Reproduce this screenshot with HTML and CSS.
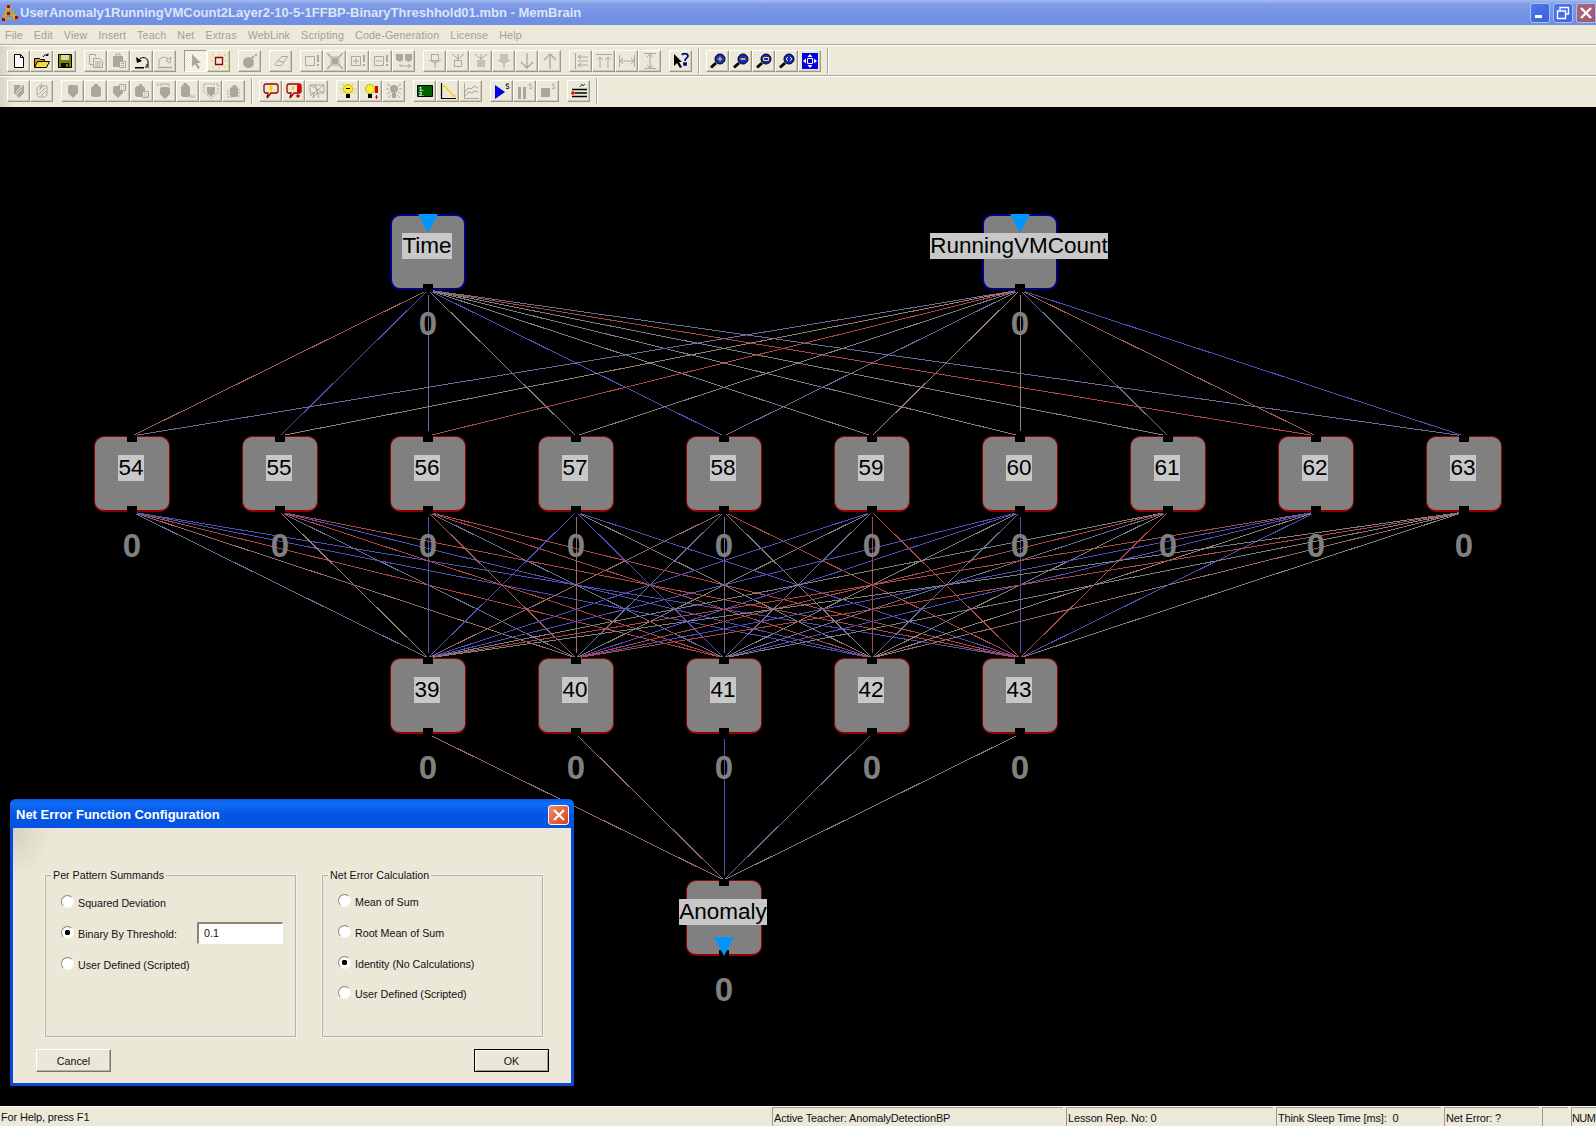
FILE: index.html
```html
<!DOCTYPE html>
<html lang="en">
<head>
    <meta charset="UTF-8">
    <title>MemBrain</title>
    <link rel="stylesheet" href="styles.css">
</head>
<body>

<svg class="icon-defs" width="0" height="0">
    <symbol id="i-new" viewBox="0 0 16 16"><path d="M3.5 1.5h6l3 3v10h-9z" fill="#fff" stroke="#000"/><path d="M9.5 1.5v3h3" fill="none" stroke="#000"/></symbol>
    <symbol id="i-open" viewBox="0 0 16 16"><path d="M.5 14V5.5h5l1 1h4v2" fill="#c8a018" stroke="#000"/><path d="M.5 14.5l3-6h12l-3 6z" fill="#f8d838" stroke="#000"/><path d="M9 4c1-2 3-3 5-2M14 .5v2h-2" fill="none" stroke="#000"/></symbol>
    <symbol id="i-save" viewBox="0 0 16 16"><path d="M1.5 1.5h13v13h-13z" fill="#808000" stroke="#000"/><path d="M4 2h8v5H4z" fill="#d8d8b0"/><path d="M4 10h8v4H4z" fill="#111"/><path d="M9 11h2v3H9z" fill="#808000"/></symbol>
    <symbol id="i-copy" viewBox="0 0 16 16"><g fill="none" stroke="currentColor"><path d="M1.5 1.5h6v2M1.5 1.5v10h4"/><path d="M5.5 5.5h6l3 3v6h-9z"/><path d="M7 9h6M7 11h6M7 13h6"/></g></symbol>
    <symbol id="i-paste" viewBox="0 0 16 16"><path d="M2 3h10v11H2z" fill="currentColor"/><path d="M5 1h4v3H5z" fill="none" stroke="currentColor"/><path d="M8.5 8.5h6v6h-6z" fill="#ece9d8" stroke="currentColor"/><path d="M10 10.5h3M10 12.5h3" stroke="currentColor"/></symbol>
    <symbol id="i-undo" viewBox="0 0 16 16"><path d="M1 14h9v1.5H1z" fill="currentColor"/><path d="M14 13V9c0-5-7-6-9-2" fill="none" stroke="currentColor"/><path d="M2 4l1 6 5-2z" fill="currentColor"/><path d="M11 14h4M12 12h2" stroke="currentColor"/></symbol>
    <symbol id="i-redo" viewBox="0 0 16 16"><path d="M2 13V8c0-4 7-5 9-2" fill="none" stroke="currentColor"/><path d="M14 4l-1 6-4-2z" fill="none" stroke="currentColor"/><path d="M1 14.5h14" stroke="currentColor" stroke-width="1.5"/></symbol>
    <symbol id="i-arrow" viewBox="0 0 16 16"><path d="M4 1l9 9H9l3 5-2 1-3-5-3 3z" fill="currentColor"/></symbol>
    <symbol id="i-square" viewBox="0 0 16 16"><path d="M4.5 4.5h7v7h-7z" fill="none" stroke="#900" stroke-width="1.3"/><path d="M1 1l2 2M15 1l-2 2M1 15l2-2M15 15l-2-2M8 0v2M0 8h2M16 8h-2M8 16v-2" stroke="#f0d000"/></symbol>
    <symbol id="i-bomb" viewBox="0 0 16 16"><circle cx="6.5" cy="9.5" r="5.5" fill="currentColor"/><path d="M10 5l2-2" stroke="currentColor" stroke-width="2"/><path d="M13 1h2v2h-2z" fill="currentColor"/></symbol>
    <symbol id="i-eraser" viewBox="0 0 16 16"><path d="M1.5 11.5l7-8h6l-6 9h-5zM5 8l5 1" fill="none" stroke="currentColor"/></symbol>
    <symbol id="i-box-x" viewBox="0 0 16 16"><path d="M1.5 3.5h9v9h-9z" fill="none" stroke="currentColor"/><path d="M13 2h2v7h-2zM13 11h2v2h-2z" fill="currentColor"/></symbol>
    <symbol id="i-cross-box" viewBox="0 0 16 16"><path d="M4 4h8v8H4z" fill="none" stroke="currentColor"/><path d="M0 0l4 4M16 0l-4 4M0 16l4-4M16 16l-4-4" stroke="currentColor" stroke-width="1.5"/><path d="M5 5h6v6H5z" fill="currentColor"/></symbol>
    <symbol id="i-plus-box" viewBox="0 0 16 16"><path d="M1.5 3.5h9v9h-9zM6 5v6M3 8h6" fill="none" stroke="currentColor"/><path d="M13 2h2v7h-2zM13 11h2v2h-2z" fill="currentColor"/></symbol>
    <symbol id="i-minus-box" viewBox="0 0 16 16"><path d="M1.5 3.5h9v9h-9zM3 8h6" fill="none" stroke="currentColor"/><path d="M13 2h2v7h-2zM13 11h2v2h-2z" fill="currentColor"/></symbol>
    <symbol id="i-merge" viewBox="0 0 16 16"><path d="M0 1h7v6l-3 2-4-2zM9 1h7v6l-3 2-4-2z" fill="currentColor"/><path d="M4 11v2h10M12 11l3 2-3 2" fill="none" stroke="currentColor"/></symbol>
    <symbol id="i-figure" viewBox="0 0 16 16"><path d="M4.5 1.5h7v6h-7zM8 8v7M2 7l6 3 6-3" fill="none" stroke="currentColor"/></symbol>
    <symbol id="i-figure2" viewBox="0 0 16 16"><path d="M4.5 7.5h7v6h-7zM8 7V1M2 1l6 5 6-5" fill="none" stroke="currentColor"/></symbol>
    <symbol id="i-figure3" viewBox="0 0 16 16"><path d="M4 7h8v7H4z" fill="currentColor" opacity=".6"/><path d="M8 7V1M2 1l6 5 6-5" fill="none" stroke="currentColor"/></symbol>
    <symbol id="i-figure4" viewBox="0 0 16 16"><path d="M4 1h8v7H4z" fill="currentColor" opacity=".6"/><path d="M8 8v7M2 7l6 3 6-3" fill="none" stroke="currentColor"/></symbol>
    <symbol id="i-down" viewBox="0 0 16 16"><path d="M8 0v15M2 9l6 6 6-6" fill="none" stroke="currentColor" stroke-width="1.3"/></symbol>
    <symbol id="i-up" viewBox="0 0 16 16"><path d="M8 16V1M2 7l6-6 6 6" fill="none" stroke="currentColor" stroke-width="1.3"/></symbol>
    <symbol id="i-align-l" viewBox="0 0 16 16"><path d="M2.5 0v16M5 4h10M5 8h10M5 12h10" fill="none" stroke="currentColor"/><path d="M5 4l3-2M5 4l3 2M5 12l3-2M5 12l3 2" stroke="currentColor"/></symbol>
    <symbol id="i-align-t" viewBox="0 0 16 16"><path d="M0 1.5h16M4 4v11M12 4v11M1 7l3-3 3 3M9 7l3-3 3 3" fill="none" stroke="currentColor"/></symbol>
    <symbol id="i-width" viewBox="0 0 16 16"><path d="M.5 2v12M15.5 2v12M1 8h14M4 5L1 8l3 3M12 5l3 3-3 3" fill="none" stroke="currentColor"/></symbol>
    <symbol id="i-height" viewBox="0 0 16 16"><path d="M2 .5h12M2 15.5h12M8 1v14M5 4l3-3 3 3M5 12l3 3 3-3" fill="none" stroke="currentColor"/></symbol>
    <symbol id="i-help" viewBox="0 0 16 16"><path d="M1 1l8 8H6l3 5-2 1-3-5-3 3z" fill="#000"/><path d="M9 2c1-2 6-2 6 1 0 2-3 2-3 5M11 10h2v2h-2z" fill="none" stroke="#000080" stroke-width="1.7"/></symbol>
    <symbol id="i-zoom-in" viewBox="0 0 16 16"><path d="M6 10l-5 4.5" stroke="#000" stroke-width="3"/><circle cx="10" cy="6" r="5" fill="#1428c8" stroke="#000"/><path d="M10 3.5v5M7.5 6h5" stroke="#f8e020"/></symbol>
    <symbol id="i-zoom-out" viewBox="0 0 16 16"><path d="M6 10l-5 4.5" stroke="#000" stroke-width="3"/><circle cx="10" cy="6" r="5" fill="#1428c8" stroke="#000"/><path d="M7.5 6h5" stroke="#f8e020" stroke-width="1.5"/></symbol>
    <symbol id="i-zoom-box" viewBox="0 0 16 16"><path d="M6 10l-5 4.5" stroke="#000" stroke-width="3"/><circle cx="10" cy="6" r="5" fill="#1428c8" stroke="#000"/><path d="M7.5 4.5h5v3h-5z" fill="none" stroke="#f8e020"/></symbol>
    <symbol id="i-zoom-fit" viewBox="0 0 16 16"><path d="M6 10l-5 4.5" stroke="#000" stroke-width="3"/><circle cx="10" cy="6" r="5" fill="#1428c8" stroke="#000"/><path d="M9 4L7 6l2 2M11 4l2 2-2 2" fill="none" stroke="#e8e8e8"/></symbol>
    <symbol id="i-pan" viewBox="0 0 16 16"><path d="M0 0h16v16H0z" fill="#0000e0"/><path d="M8 1l2.5 3h-5zM8 15l2.5-3h-5zM1 8l3-2.5v5zM15 8l-3-2.5v5z" fill="#fff"/><path d="M5.5 5.5h5v5h-5z" fill="none" stroke="#fff"/></symbol>

    <symbol id="i-shield" viewBox="0 0 16 16"><path d="M3 4q0-2 2-2h6q2 0 2 2v6l-5 5-5-5z" fill="currentColor"/></symbol>
    <symbol id="i-round" viewBox="0 0 16 16"><path d="M6 1h4v2h1l2 2v7l-2 2H5l-2-2V5l2-2h1z" fill="currentColor"/></symbol>
    <symbol id="i-shield-hatch" viewBox="0 0 16 16"><path d="M3 2h10v8l-5 5-5-5z" fill="currentColor"/><path d="M5 9l6-6M5 12l6-6M9 3h3" stroke="#ece9d8"/></symbol>
    <symbol id="i-round-hatch" viewBox="0 0 16 16"><path d="M5 3h8v9l-2 2H5l-2-2V5z" fill="none" stroke="currentColor"/><path d="M5 11l6-6M7 13l5-5M5 7l3-3M8 0L6 7" stroke="currentColor"/></symbol>
    <symbol id="i-shield-dots" viewBox="0 0 16 16"><path d="M2 5q0-2 2-2h8v7l-5 5-5-5z" fill="currentColor"/><path d="M8.5 1.5h6v6h-6z" fill="#ece9d8" stroke="currentColor"/><path d="M10 3h1v1h-1zM12.5 3h1v1h-1zM10 5.5h1v1h-1zM12.5 5.5h1v1h-1z" fill="currentColor"/></symbol>
    <symbol id="i-round-dots" viewBox="0 0 16 16"><path d="M5 1h3v2h1l2 2v7l-2 2H3l-2-2V5l2-2h2z" fill="currentColor"/><path d="M8.5 8.5h6v6h-6z" fill="#ece9d8" stroke="currentColor"/><path d="M10 10h1v1h-1zM12.5 10h1v1h-1zM10 12.5h1v1h-1zM12.5 12.5h1v1h-1z" fill="currentColor"/></symbol>
    <symbol id="i-shield-11" viewBox="0 0 16 16"><path d="M3 6q0-2 2-2h6q2 0 2 2v5l-5 5-5-5z" fill="currentColor"/><path d="M1 0v3M4 0v3M5 1h6M12 0v3" stroke="currentColor"/></symbol>
    <symbol id="i-round-11" viewBox="0 0 16 16"><path d="M4 0h3v2h1l2 2v8l-1 2H3l-2-2V4l2-2z" fill="currentColor"/><path d="M11 12v3M14 12v3M12 14h1" stroke="currentColor"/></symbol>
    <symbol id="i-shield-frame" viewBox="0 0 16 16"><path d="M4 4h8v6l-4 4-4-4z" fill="currentColor"/><path d="M1 1h14v8l-7 7-7-7z" fill="none" stroke="currentColor" stroke-dasharray="2 1"/></symbol>
    <symbol id="i-round-frame" viewBox="0 0 16 16"><path d="M7 2h3v1l2 2v7l-1 2H5l-1-2V5l3-2z" fill="currentColor"/><path d="M1 8h4M1 11h4M1 14h4M13 6v8" stroke="currentColor" stroke-dasharray="2 1"/></symbol>

    <symbol id="i-bubble" viewBox="0 0 16 16"><path d="M1 3q0-2 2-2h10q2 0 2 2v5q0 2-2 2H8l-4 5 1-5H3q-2 0-2-2z" fill="#ece9d8" stroke="#900" stroke-width="1.3"/><path d="M7 3h2v4H7zM7 8h2" fill="#f0d000" stroke="#f0d000"/></symbol>
    <symbol id="i-bubble-plus" viewBox="0 0 16 16"><path d="M1 3q0-2 2-2h10q2 0 2 2v5q0 2-2 2H8l-4 5 1-5H3q-2 0-2-2z" fill="#ece9d8" stroke="#900" stroke-width="1.3"/><path d="M6 3h2v4H6z" fill="#f0d000"/><path d="M11 2h4v8h-4z" fill="#e00000"/><path d="M12 11v4M10 13h4" stroke="#e00000" stroke-width="1.3"/></symbol>
    <symbol id="i-bubble-off" viewBox="0 0 16 16"><path d="M1 2h14v8H8l-4 5 1-5H1zM1 2l14 8M15 2L1 13M6 1l4 14" fill="none" stroke="currentColor"/></symbol>
    <symbol id="i-bulb" viewBox="0 0 16 16"><circle cx="8" cy="6" r="4.5" fill="#f8f030" stroke="#c8b000"/><path d="M6 11h4v4H6z" fill="#000"/><path d="M6 5l1 1 1-1 1 1 1-1" fill="none" stroke="#000"/><path d="M0 6h2M14 6h2M2 1l2 1M14 1l-2 1M1 10l2-1M15 10l-2-1" stroke="#e8d000"/></symbol>
    <symbol id="i-bulb-warn" viewBox="0 0 16 16"><circle cx="7" cy="6" r="4.5" fill="#f8f030" stroke="#c8b000"/><path d="M5 11h4v4H5z" fill="#000"/><path d="M12 3h3v7h-3z" fill="#e00000"/><path d="M13.5 12v4M12 14h3" stroke="#e00000"/></symbol>
    <symbol id="i-bulb-off" viewBox="0 0 16 16"><circle cx="8" cy="6" r="4" fill="currentColor"/><path d="M6 10h4v5H6z" fill="currentColor"/><path d="M0 6h3M13 6h3M1 1l3 2M15 1l-3 2M1 11l3-2M15 11l-3-2M2 15l3-3M14 15l-3-3" stroke="currentColor"/></symbol>
    <symbol id="i-chart" viewBox="0 0 16 16"><path d="M1.5 0v15.5H16" fill="none" stroke="#000" stroke-width="1.2"/><path d="M2 3h3l3 4 3 3 2 3h3" fill="none" stroke="#f0d000" stroke-width="1.3"/></symbol>
    <symbol id="i-chart-off" viewBox="0 0 16 16"><path d="M1.5 0v15.5H16M2 9l3-4 3 1 3-3 4 2M2 13l4-4 3 1 3-2 3 1" fill="none" stroke="currentColor"/></symbol>
    <symbol id="i-play" viewBox="0 0 16 16"><path d="M1 2l10 7-10 7z" fill="#0000e0"/><path d="M15 1.5c-1-1-3-1-3 .5s3 1 3 2.5-2 1.5-3 .5" fill="none" stroke="#000"/></symbol>
    <symbol id="i-pause" viewBox="0 0 16 16"><path d="M1 4h3v12H1zM6 4h3v12H6z" fill="currentColor"/><path d="M15 1.5c-1-1-3-1-3 .5s3 1 3 2.5-2 1.5-3 .5" fill="none" stroke="currentColor"/></symbol>
    <symbol id="i-stop" viewBox="0 0 16 16"><path d="M1 5h9v9H1z" fill="currentColor"/><path d="M15 1.5c-1-1-3-1-3 .5s3 1 3 2.5-2 1.5-3 .5" fill="none" stroke="currentColor"/></symbol>
    <symbol id="i-list" viewBox="0 0 16 16"><path d="M1 6.5h15M4 10h12M1 13.5h15" stroke="#000" stroke-width="1.5" fill="none"/><circle cx="2" cy="10" r="1.8" fill="#e00000"/><path d="M9 4l2-3 1 2 2-2" fill="none" stroke="#008000"/></symbol>
</svg>

<div class="window">
    <div class="titlebar">
        <svg class="app-icon" width="18" height="18" viewBox="0 0 18 18">
            <path d="M2 15L7 2l9 12zM2 15l5-6 9 5M7 2v7" fill="none" stroke="#d8b000" stroke-width="1.5"/>
            <path d="M6 1h3v3H6zM1 14h3v3H1zM14 12h3v3h-3zM6 8h3v3H6z" fill="#c00000"/>
        </svg>
        <span class="title-text">UserAnomaly1RunningVMCount2Layer2-10-5-1FFBP-BinaryThreshhold01.mbn - MemBrain</span>
        <div class="win-buttons">
            <div class="win-btn">
                <svg width="12" height="12" viewBox="0 0 12 12"><path d="M1 8h7v3H1z" fill="#fff"/></svg>
            </div>
            <div class="win-btn">
                <svg width="14" height="14" viewBox="0 0 14 14"><path d="M4 4V1.5h8.5V8H10M1.5 5h8v7.5h-8z" fill="none" stroke="#fff" stroke-width="1.4"/></svg>
            </div>
            <div class="win-btn win-close">
                <svg width="14" height="14" viewBox="0 0 14 14"><path d="M2 2l10 10M12 2L2 12" stroke="#fff" stroke-width="2.4"/></svg>
            </div>
        </div>
    </div>

    <div class="menubar">
        <span>File</span>
        <span>Edit</span>
        <span>View</span>
        <span>Insert</span>
        <span>Teach</span>
        <span>Net</span>
        <span>Extras</span>
        <span>WebLink</span>
        <span>Scripting</span>
        <span>Code-Generation</span>
        <span>License</span>
        <span>Help</span>
    </div>

    <div class="toolbar">
        <div class="tool-group">
            <div class="tool"><svg><use href="#i-new"/></svg></div>
            <div class="tool"><svg><use href="#i-open"/></svg></div>
            <div class="tool"><svg><use href="#i-save"/></svg></div>
        </div>
        <div class="tool-group">
            <div class="tool"><svg><use href="#i-copy"/></svg></div>
            <div class="tool"><svg><use href="#i-paste"/></svg></div>
            <div class="tool on-dark"><svg><use href="#i-undo"/></svg></div>
            <div class="tool"><svg><use href="#i-redo"/></svg></div>
        </div>
        <div class="tool-group">
            <div class="tool tool-pressed"><svg><use href="#i-arrow"/></svg></div>
            <div class="tool"><svg><use href="#i-square"/></svg></div>
        </div>
        <div class="tool-group">
            <div class="tool"><svg><use href="#i-bomb"/></svg></div>
        </div>
        <div class="tool-group">
            <div class="tool"><svg><use href="#i-eraser"/></svg></div>
        </div>
        <div class="tool-group">
            <div class="tool"><svg><use href="#i-box-x"/></svg></div>
            <div class="tool"><svg><use href="#i-cross-box"/></svg></div>
            <div class="tool"><svg><use href="#i-plus-box"/></svg></div>
            <div class="tool"><svg><use href="#i-minus-box"/></svg></div>
            <div class="tool"><svg><use href="#i-merge"/></svg></div>
        </div>
        <div class="tool-group">
            <div class="tool"><svg><use href="#i-figure"/></svg></div>
            <div class="tool"><svg><use href="#i-figure2"/></svg></div>
            <div class="tool"><svg><use href="#i-figure3"/></svg></div>
            <div class="tool"><svg><use href="#i-figure4"/></svg></div>
            <div class="tool"><svg><use href="#i-down"/></svg></div>
            <div class="tool"><svg><use href="#i-up"/></svg></div>
        </div>
        <div class="tool-group">
            <div class="tool"><svg><use href="#i-align-l"/></svg></div>
            <div class="tool"><svg><use href="#i-align-t"/></svg></div>
            <div class="tool"><svg><use href="#i-width"/></svg></div>
            <div class="tool"><svg><use href="#i-height"/></svg></div>
        </div>
        <div class="tool-group">
            <div class="tool"><svg><use href="#i-help"/></svg></div>
        </div>
        <div class="tool-sep"></div>
        <div class="tool-group">
            <div class="tool"><svg><use href="#i-zoom-in"/></svg></div>
            <div class="tool"><svg><use href="#i-zoom-out"/></svg></div>
            <div class="tool"><svg><use href="#i-zoom-box"/></svg></div>
            <div class="tool"><svg><use href="#i-zoom-fit"/></svg></div>
            <div class="tool"><svg><use href="#i-pan"/></svg></div>
        </div>
        <div class="tool-sep"></div>
    </div>

    <div class="toolbar toolbar-second">
        <div class="tool-group">
            <div class="tool"><svg><use href="#i-shield-hatch"/></svg></div>
            <div class="tool"><svg><use href="#i-round-hatch"/></svg></div>
        </div>
        <div class="tool-group">
            <div class="tool"><svg><use href="#i-shield"/></svg></div>
            <div class="tool"><svg><use href="#i-round"/></svg></div>
            <div class="tool"><svg><use href="#i-shield-dots"/></svg></div>
            <div class="tool"><svg><use href="#i-round-dots"/></svg></div>
            <div class="tool"><svg><use href="#i-shield-11"/></svg></div>
            <div class="tool"><svg><use href="#i-round-11"/></svg></div>
            <div class="tool"><svg><use href="#i-shield-frame"/></svg></div>
            <div class="tool"><svg><use href="#i-round-frame"/></svg></div>
        </div>
        <div class="tool-sep"></div>
        <div class="tool-group">
            <div class="tool"><svg><use href="#i-bubble"/></svg></div>
            <div class="tool"><svg><use href="#i-bubble-plus"/></svg></div>
            <div class="tool"><svg><use href="#i-bubble-off"/></svg></div>
        </div>
        <div class="tool-group">
            <div class="tool"><svg><use href="#i-bulb"/></svg></div>
            <div class="tool"><svg><use href="#i-bulb-warn"/></svg></div>
            <div class="tool"><svg><use href="#i-bulb-off"/></svg></div>
        </div>
        <div class="tool-group">
            <div class="tool">
                <svg viewBox="0 0 16 16">
                    <path d="M.5 2.5h15v11H.5z" fill="#006000" stroke="#000"/>
                    <text x="2" y="8" class="tool-number">1.</text>
                    <text x="2" y="13" class="tool-number">2.</text>
                </svg>
            </div>
            <div class="tool"><svg><use href="#i-chart"/></svg></div>
            <div class="tool"><svg><use href="#i-chart-off"/></svg></div>
        </div>
        <div class="tool-group">
            <div class="tool"><svg><use href="#i-play"/></svg></div>
            <div class="tool"><svg><use href="#i-pause"/></svg></div>
            <div class="tool"><svg><use href="#i-stop"/></svg></div>
        </div>
        <div class="tool-group">
            <div class="tool"><svg><use href="#i-list"/></svg></div>
        </div>
        <div class="tool-sep"></div>
    </div>

    <div class="canvas" id="canvas">
        <svg class="wires" id="wires" width="1596" height="999"></svg>

        <div class="dialog">
            <div class="dialog-title">
                <span>Net Error Function Configuration</span>
                <div class="dialog-close">
                    <svg width="12" height="12" viewBox="0 0 12 12"><path d="M1 1l10 10M11 1L1 11" stroke="#fff" stroke-width="2.2"/></svg>
                </div>
            </div>
            <div class="dialog-body">
                <div class="dialog-groups">
                    <fieldset class="group group-left">
                        <legend>Per Pattern Summands</legend>
                        <label class="radio-row"><input type="radio" name="summand"> Squared Deviation</label>
                        <label class="radio-row"><input type="radio" name="summand" checked> Binary By Threshold:
                            <input type="text" class="threshold" value="0.1"></label>
                        <label class="radio-row"><input type="radio" name="summand"> User Defined (Scripted)</label>
                    </fieldset>
                    <fieldset class="group group-right">
                        <legend>Net Error Calculation</legend>
                        <label class="radio-row"><input type="radio" name="calc"> Mean of Sum</label>
                        <label class="radio-row"><input type="radio" name="calc"> Root Mean of Sum</label>
                        <label class="radio-row"><input type="radio" name="calc" checked> Identity (No Calculations)</label>
                        <label class="radio-row"><input type="radio" name="calc"> User Defined (Scripted)</label>
                    </fieldset>
                </div>
                <div class="dialog-actions">
                    <button class="btn">Cancel</button>
                    <button class="btn btn-default">OK</button>
                </div>
            </div>
        </div>
    </div>

    <div class="statusbar">
        <span class="status-help">For Help, press F1</span>
        <span class="status-pane pane-teacher">Active Teacher: AnomalyDetectionBP</span>
        <span class="status-pane pane-lesson">Lesson Rep. No: 0</span>
        <span class="status-pane pane-sleep">Think Sleep Time [ms]:&nbsp; 0</span>
        <span class="status-pane pane-error">Net Error: ?</span>
        <span class="status-pane pane-empty"></span>
        <span class="status-pane pane-num">NUM</span>
    </div>
</div>

<script src="script.js"></script>
</body>
</html>
```

FILE: styles.css
```css
body {
    margin: 0;
    font-family: "Liberation Sans", Arial, sans-serif;
    font-size: 11px;
    background-color: #000;
    overflow: hidden;
}
.icon-defs {
    position: absolute;
}
.window {
    display: flex;
    flex-direction: column;
    height: 100vh;
    background-color: #ece9d8;
}

/* title bar (inactive window colours) */
.titlebar {
    display: flex;
    align-items: center;
    height: 25px;
    flex: none;
    background: linear-gradient(#a4bbee 0, #7f9de6 4px, #7392e3 14px, #6f8fe0 100%);
}
.app-icon {
    margin: 0 1px 0 1px;
}
.title-text {
    color: #dbe6fb;
    font-size: 13px;
    font-weight: bold;
    white-space: nowrap;
}
.win-buttons {
    display: flex;
    gap: 3px;
    margin-left: auto;
}
.win-btn {
    display: flex;
    align-items: center;
    justify-content: center;
    width: 20px;
    height: 20px;
    box-sizing: border-box;
    border: 1px solid #a9c0f0;
    border-radius: 3px;
    background: linear-gradient(135deg, #4f78e8, #3a62dc);
}
.win-close {
    border-radius: 3px 0 0 3px;
    background: linear-gradient(135deg, #ac6680, #a05570);
}

.menubar {
    display: flex;
    align-items: center;
    gap: 11px;
    height: 20px;
    flex: none;
    padding-left: 5px;
    box-sizing: border-box;
    color: #a3a194;
    font-size: 10.7px;
    letter-spacing: .15px;
    border-bottom: 1px solid #aca899;
    box-shadow: 0 1px 0 #fff;
}

.toolbar {
    display: flex;
    align-items: flex-start;
    gap: 8px;
    flex: none;
    height: 30px;
    padding: 4px 0 0 7px;
    box-sizing: border-box;
    border-bottom: 1px solid #aca899;
    box-shadow: 0 1px 0 #fff;
    margin-top: 1px;
    background: linear-gradient(90deg, #d8d5c4 0, #ece9d8 14px);
}
.toolbar-second {
    padding-top: 3px;
    margin-top: 1px;
    border-bottom: 0;
    box-shadow: none;
}
.tool-group {
    display: flex;
    color: #aca899;
}
.tool {
    display: flex;
    align-items: center;
    justify-content: center;
    width: 23px;
    height: 22px;
    box-sizing: border-box;
    border: 1px solid;
    border-color: #fff #9d9a8a #9d9a8a #fff;
    box-shadow: inset -1px -1px 0 #cdcabb;
}
.tool svg {
    width: 16px;
    height: 16px;
}
.tool-pressed {
    border-color: #9d9a8a #fff #fff #9d9a8a;
    box-shadow: none;
    background-color: #f5f4ec;
    background-image: repeating-conic-gradient(#ece9d8 0 25%, #fbfaf5 0 50%);
    background-size: 2px 2px;
}
.on-dark {
    color: #000;
}
.tool-sep {
    width: 2px;
    height: 26px;
    margin: -2px -2px 0 -2px;
    background-color: #fff;
    border-left: 1px solid #aca899;
    box-sizing: border-box;
}
.tool-number {
    fill: #fff;
    font-size: 5.5px;
    font-weight: bold;
}

.canvas {
    position: relative;
    flex: 1;
    background-color: #000;
    overflow: hidden;
}
.wires {
    position: absolute;
    left: 0;
    top: 0;
    shape-rendering: crispEdges;
}

/* network nodes */
.node {
    position: absolute;
    display: flex;
    align-items: center;
    justify-content: center;
    width: 76px;
    height: 76px;
    padding-bottom: 12px;
    box-sizing: border-box;
    background-color: #808080;
    border: 1px solid #900000;
    border-bottom-width: 2px;
    border-radius: 10px;
}
.node-input {
    border: 2px solid #000080;
}
.node-label {
    height: 26px;
    margin-right: 2px;
    line-height: 26px;
    color: #000;
    background-color: #c8c8c8;
    font-size: 22.5px;
    white-space: nowrap;
}
.node::before,
.node::after {
    content: "";
    position: absolute;
    left: 50%;
    width: 10px;
    margin-left: -5px;
    background-color: #000;
}
.node::before {
    top: -2px;
    height: 7px;
}
.node::after {
    bottom: -4px;
    height: 8px;
}
.node-input::before {
    display: none;
}
.node-value {
    position: absolute;
    left: -20px;
    right: -20px;
    top: 100%;
    margin-top: 19px;
    color: #808080;
    font-size: 33px;
    font-weight: bold;
    line-height: 34px;
    text-align: center;
}
.node-arrow {
    position: absolute;
    left: 50%;
    margin-left: -10px;
    width: 0;
    height: 0;
    border-left: 10px solid transparent;
    border-right: 10px solid transparent;
    border-top: 19px solid #0095ff;
    z-index: 1;
}
.node-input .node-arrow {
    top: -2px;
}
.node-output .node-arrow {
    bottom: -2px;
}

/* dialog */
.dialog {
    position: absolute;
    left: 10px;
    top: 692px;
    width: 564px;
    height: 287px;
    box-sizing: border-box;
    display: flex;
    flex-direction: column;
    background-color: #0a48dc;
    border-radius: 6px 6px 0 0;
    padding: 0 3px 3px 3px;
    z-index: 5;
}
.dialog-title {
    display: flex;
    align-items: center;
    justify-content: space-between;
    height: 29px;
    flex: none;
    margin: 0 -3px;
    padding: 2px 5px 0 6px;
    box-sizing: border-box;
    color: #fff;
    font-size: 13px;
    font-weight: bold;
    border-radius: 6px 6px 0 0;
    background: linear-gradient(#0a5ae8 0, #0f6cf6 15%, #0656e4 50%, #0452e2 100%);
}
.dialog-close {
    display: flex;
    align-items: center;
    justify-content: center;
    width: 21px;
    height: 20px;
    box-sizing: border-box;
    border: 1px solid #fff;
    border-radius: 3px;
    background: linear-gradient(135deg, #ee8a6a, #d8401a);
}
.dialog-body {
    flex: 1;
    padding: 41px 22px 0 23px;
    color: #111;
    font-size: 10.7px;
    background: radial-gradient(ellipse 40px 50px at 0 0, #d4d1c1, #ebe8d7);
}
.dialog-groups {
    display: flex;
    gap: 26px;
    margin-left: 9px;
}
.group {
    margin: 0;
    padding: 6px 12px 0 15px;
    height: 168px;
    box-sizing: border-box;
    border: 1px solid #b5b3a3;
    box-shadow: 0 0 0 1px rgba(255, 255, 255, 0.5);
}
.group legend {
    padding: 0 2px;
    margin-left: -10px;
}
.group-left {
    width: 251px;
}
.group-right {
    width: 221px;
}
.radio-row {
    display: flex;
    align-items: center;
    height: 31px;
    gap: 4px;
    white-space: nowrap;
}
.group-right .radio-row {
    height: 30.7px;
}
.radio-row input[type="radio"] {
    appearance: none;
    flex: none;
    width: 13px;
    height: 13px;
    margin: -3px 0 0 0;
    border-radius: 50%;
    border: 1px solid;
    border-color: #8a8878 #f8f8f2 #f8f8f2 #8a8878;
    background-color: #fff;
}
.radio-row input[type="radio"]:checked {
    background: radial-gradient(circle, #000 0, #000 2.5px, #fff 3px);
}
.threshold {
    width: 86px;
    height: 22px;
    margin: -1px 0 0 auto;
    padding: 0 0 2px 5px;
    box-sizing: border-box;
    font: inherit;
    color: #111;
    background-color: #fff;
    border: 1px solid;
    border-width: 2px 1px 1px 2px;
    border-color: #8a8878 #fff #fff #8a8878;
    outline: none;
}
.dialog-actions {
    display: flex;
    justify-content: space-between;
    margin-top: 12px;
}
.btn {
    width: 75px;
    height: 23px;
    padding: 0;
    font: inherit;
    color: #111;
    background-color: #ebe8d7;
    border: 1px solid;
    border-color: #fff #77756a #77756a #fff;
    box-shadow: inset -1px -1px 0 #b5b3a3;
}
.btn-default {
    border: 1px solid #000;
    box-shadow: inset 1px 1px 0 #fff, inset -1px -1px 0 #a09e90;
}

.statusbar {
    display: flex;
    align-items: center;
    height: 20px;
    flex: none;
    border-top: 1px solid #fff;
    box-sizing: border-box;
    letter-spacing: -.15px;
    color: #111;
}
.status-help {
    margin-left: 1px;
    margin-right: auto;
}
.status-pane {
    height: 100%;
    line-height: 20px;
    padding-left: 1px;
    margin-left: 3px;
    box-sizing: border-box;
    white-space: nowrap;
    border-top: 1px solid #9d9a8a;
    border-left: 1px solid #9d9a8a;
}
.pane-teacher { width: 291px; }
.pane-lesson { width: 207px; }
.pane-sleep { width: 165px; }
.pane-error { width: 95px; }
.pane-empty { width: 26px; }
.pane-num { width: 25px; padding-left: 0; letter-spacing: -.6px; }
```

FILE: script.js
```js
// network layout, positions are relative to the black canvas
const NODE_SIZE = 76;

function col(i) {
    return 132 + i * 148;
}

const blue = '#5050b8', steel = '#6c6c98', grey = '#808080', rose = '#986c6c',
    red = '#b04848', salmon = '#a06058', tan = '#988078';

const layers = [
    { top: 107, nodes: [
        { name: 'Time', x: col(2), kind: 'input', wires: [salmon, blue, steel, grey, blue, grey, grey, grey, red, steel] },
        { name: 'RunningVMCount', x: col(6), kind: 'input', wires: [steel, tan, red, grey, steel, tan, tan, steel, salmon, blue] }
    ]},
    { top: 329, nodes: [
        { name: '54', x: col(0), wires: [steel, rose, red, blue, blue] },
        { name: '55', x: col(1), wires: [tan, steel, red, blue, red] },
        { name: '56', x: col(2), wires: [blue, salmon, steel, red, red] },
        { name: '57', x: col(3), wires: [blue, rose, blue, grey, blue] },
        { name: '58', x: col(4), wires: [rose, steel, steel, grey, red] },
        { name: '59', x: col(5), wires: [blue, grey, steel, red, red] },
        { name: '60', x: col(6), wires: [blue, blue, grey, steel, blue] },
        { name: '61', x: col(7), wires: [grey, red, steel, grey, red] },
        { name: '62', x: col(8), wires: [red, blue, blue, tan, blue] },
        { name: '63', x: col(9), wires: [grey, red, grey, rose, grey] }
    ]},
    { top: 551, nodes: [
        { name: '39', x: col(2), wires: [rose] },
        { name: '40', x: col(3), wires: [rose] },
        { name: '41', x: col(4), wires: [blue] },
        { name: '42', x: col(5), wires: [steel] },
        { name: '43', x: col(6), wires: [grey] }
    ]},
    { top: 773, nodes: [
        { name: 'Anomaly', x: col(4), kind: 'output', wires: [] }
    ]}
];

const SVG_NS = 'http://www.w3.org/2000/svg';
const canvas = document.getElementById('canvas');
const wires = document.getElementById('wires');
const dialog = canvas.querySelector('.dialog');

function addWire(x1, y1, x2, y2, color) {
    const line = document.createElementNS(SVG_NS, 'line');
    // straight down wires stop short of the connectors
    if (x1 === x2) {
        y1 += 5;
        y2 -= 5;
    }
    line.setAttribute('x1', x1);
    line.setAttribute('y1', y1);
    line.setAttribute('x2', x2);
    line.setAttribute('y2', y2);
    line.setAttribute('stroke', color);
    wires.appendChild(line);
}

function addNode(node, top) {
    const box = document.createElement('div');
    box.className = 'node' + (node.kind ? ' node-' + node.kind : '');
    box.style.left = (node.x - NODE_SIZE / 2) + 'px';
    box.style.top = top + 'px';

    const label = document.createElement('span');
    label.className = 'node-label';
    label.textContent = node.name;
    box.appendChild(label);

    if (node.kind) {
        const arrow = document.createElement('div');
        arrow.className = 'node-arrow';
        box.appendChild(arrow);
    }

    const value = document.createElement('div');
    value.className = 'node-value';
    value.textContent = '0';
    box.appendChild(value);

    canvas.insertBefore(box, dialog);
}

layers.forEach(function(layer, i) {
    const next = layers[i + 1];
    layer.nodes.forEach(function(node) {
        if (next) {
            next.nodes.forEach(function(target, j) {
                addWire(node.x, layer.top + NODE_SIZE, target.x, next.top, node.wires[j]);
            });
        }
        addNode(node, layer.top);
    });
});
```
